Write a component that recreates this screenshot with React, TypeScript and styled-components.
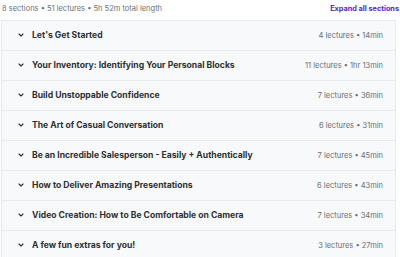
import * as React from "react";
import styled, { createGlobalStyle } from "styled-components";

interface ISection {
  title: string;
  meta: string;
}

const sections: ISection[] = [
  { title: "Let's Get Started", meta: "4 lectures • 14min" },
  { title: "Your Inventory: Identifying Your Personal Blocks", meta: "11 lectures • 1hr 13min" },
  { title: "Build Unstoppable Confidence", meta: "7 lectures • 36min" },
  { title: "The Art of Casual Conversation", meta: "6 lectures • 31min" },
  { title: "Be an Incredible Salesperson - Easily + Authentically", meta: "7 lectures • 45min" },
  { title: "How to Deliver Amazing Presentations", meta: "6 lectures • 43min" },
  { title: "Video Creation: How to Be Comfortable on Camera", meta: "7 lectures • 34min" },
  { title: "A few fun extras for you!", meta: "3 lectures • 27min" },
];

const GlobalStyle = createGlobalStyle`
  body {
    margin: 0;
    background: #ffffff;
    font-family: "Inter", "Noto Sans", sans-serif;
    color: #2d2f31;
  }
`;

const Wrapper = styled.div`
  width: 400px;
  padding: 0 4px 0 1px;
  box-sizing: border-box;
`;

const Header = styled.div`
  height: 14px;
  margin-bottom: 5px;
  display: flex;
  align-items: center;
  justify-content: space-between;
  padding-left: 1px;
  padding-top: 1px;
`;

const Summary = styled.span`
  font-size: 7.5px;
  color: #6a6f73;
`;

const ExpandAll = styled.button`
  border: none;
  background: none;
  padding: 0;
  margin-right: -3px;
  font-family: inherit;
  font-size: 7.3px;
  font-weight: 700;
  color: #5624d0;
  cursor: pointer;
`;

const Accordion = styled.div`
  border: 1px solid #e8ebee;
`;

const Row = styled.div<{ $last?: boolean }>`
  height: 29px;
  display: flex;
  align-items: center;
  background: #f7f9fa;
  border-bottom: ${(p) => (p.$last ? "none" : "1px solid #e8ebee")};
  padding: 0 12px 1px 15px;
  box-sizing: content-box;
  height: 28px;
`;

const Chevron = styled.svg`
  width: 8px;
  height: 8px;
  flex-shrink: 0;
  margin-right: 7px;
`;

const Title = styled.span`
  flex: 1;
  font-size: 8.6px;
  font-weight: 700;
  color: #2d2f31;
  white-space: nowrap;
`;

const Meta = styled.span`
  font-size: 7.5px;
  color: #6a6f73;
  white-space: nowrap;
`;

export default function App() {
  return (
    <>
      <GlobalStyle />
      <Wrapper>
        <Header>
          <Summary>8 sections • 51 lectures • 5h 52m total length</Summary>
          <ExpandAll>Expand all sections</ExpandAll>
        </Header>
        <Accordion>
          {sections.map((s, i) => (
            <Row key={i} $last={i === sections.length - 1}>
              <Chevron viewBox="0 0 8 8">
                <path d="M2 3l2 2 2-2" fill="none" stroke="#2d2f31" strokeWidth="1.1" strokeLinecap="round" strokeLinejoin="round" />
              </Chevron>
              <Title>{s.title}</Title>
              <Meta>{s.meta}</Meta>
            </Row>
          ))}
        </Accordion>
      </Wrapper>
    </>
  );
}
